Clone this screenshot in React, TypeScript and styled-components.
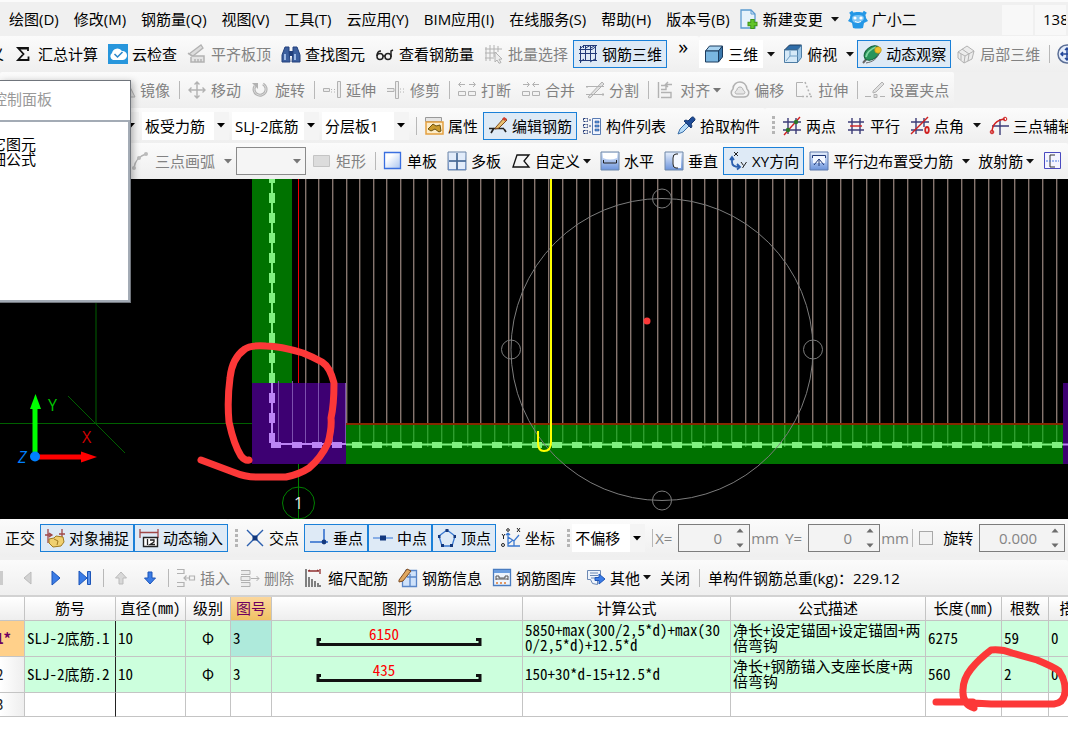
import React from 'react';
import styled, { createGlobalStyle, css } from 'styled-components';

const Global = createGlobalStyle`
  * { box-sizing: border-box; }
  body {
    margin: 0;
    background: #ffffff;
    color: #000000;
    font: 15px/20px "Open Sans", "Noto Sans CJK SC", sans-serif;
    overflow-x: hidden;
  }
  button, input, select { font: inherit; color: inherit; margin: 0; padding: 0; border: 0; background: none; }
`;

const Page = styled.main`
  position: relative;
  overflow: hidden;
  background: #f0f0f0;
  border-top: 2px solid #fbfbfb;
`;

const Row = styled.div<{ $h: number; $top?: number }>`
  display: flex;
  align-items: stretch;
  height: ${p => p.$h}px;
  padding-top: ${p => p.$top ?? 0}px;
  overflow: hidden;
`;

const Strip = styled.div<{ $start?: number; $grow?: boolean }>`
  display: flex;
  align-items: center;
  flex: ${p => (p.$grow ? '1 0 auto' : 'none')};
  padding-left: ${p => Math.max(p.$start ?? 0, 0)}px;
  margin-left: ${p => Math.min(p.$start ?? 0, 0)}px;
  background: linear-gradient(#fbfbfb, #efefef);
  border-radius: 2px;
`;

const MenuBar = styled.nav`
  display: flex;
  align-items: center;
  height: 34px;
  padding-left: 9px;
  overflow: hidden;
`;
const Menus = styled.div`
  display: flex;
  flex: none;
  gap: 15px;
  margin-right: 4px;
`;

const Button = styled.button<{ $on?: boolean; $off?: boolean; $white?: boolean }>`
  display: flex;
  align-items: center;
  flex: none;
  gap: 4px;
  height: 28px;
  padding: 0 4px;
  border: 1px solid transparent;
  white-space: nowrap;
  color: ${p => (p.$off ? '#828282' : '#000000')};
  ${p => p.$white && css`background: #ffffff;`}
  ${p => p.$on && css`background: #deeaf6; border-color: #1a80d8;`}
`;

const IconButton = styled.button`
  display: flex;
  flex: none;
  align-items: center;
  justify-content: center;
  width: 29px;
  height: 28px;
`;

const Caret = styled.button<{ $narrow?: boolean; $off?: boolean }>`
  display: flex;
  flex: none;
  align-items: center;
  justify-content: center;
  width: ${p => (p.$narrow ? 10 : 15)}px;
  height: 28px;
  margin-left: ${p => (p.$narrow ? -3 : 0)}px;
  margin-right: ${p => (p.$narrow ? 3 : 0)}px;
  color: ${p => (p.$off ? '#777777' : '#111111')};
`;

const Divider = styled.span`
  flex: none;
  width: 1px;
  height: 18px;
  margin: 0 2px 0 4px;
  background: #b8b8b8;
`;

const Grip = styled.span`
  flex: none;
  width: 3px;
  height: 19px;
  margin: 0 2px 0 7px;
  background: repeating-linear-gradient(#b5b5b5 0 3px, transparent 3px 5px);
`;

const Combo = styled.label<{ $w: number; $boxed?: boolean }>`
  display: flex;
  flex: none;
  align-items: center;
  width: ${p => p.$w}px;
  height: 28px;
  margin-right: ${p => (p.$boxed ? 1 : 3)}px;
  margin-left: ${p => (p.$boxed ? 1 : 0)}px;
  padding-right: 4px;
  background: ${p => (p.$boxed ? '#f5f5f5' : 'linear-gradient(90deg, #ffffff calc(100% - 15px), #f4f4f4 calc(100% - 15px))')};
  border: ${p => (p.$boxed ? '1px solid #8a8a8a' : '0')};
  color: ${p => (p.$boxed ? '#777777' : '#000000')};
  select {
    appearance: none;
    flex: 1;
    min-width: 0;
    height: 26px;
    padding-left: 3px;
    margin-right: 6px;
    overflow: hidden;
    outline: 0;
    text-overflow: clip;
  }
`;

const MenuItem = styled.button`
  flex: none;
  white-space: nowrap;
`;
const MenuBox = styled.div`
  flex: none;
  width: 31px;
  height: 30px;
  margin: 2px 2px 0 0;
  padding-left: 8px;
  line-height: 28px;
  overflow: hidden;
  background: #f8f8f8;
`;
const Spacer = styled.span`flex: 1;`;
const More = styled.button`
  flex: none;
  width: 32px;
  height: 34px;
  font-size: 20px;
  line-height: 20px;
  display: flex;
  justify-content: center;
`;
const Plain = styled.span<{ $off?: boolean }>`
  flex: none;
  padding: 0 6px;
  white-space: nowrap;
  color: ${p => (p.$off ? '#8c8c8c' : '#000000')};
`;
const Field = styled.label<{ $w: number }>`
  display: flex;
  align-items: center;
  flex: none;
  width: ${p => p.$w}px;
  height: 28px;
  padding-right: 5px;
  border: 1px solid #7c7c7c;
  background: #f3f3f3;
  color: #858585;
  input {
    flex: 1;
    min-width: 0;
    text-align: right;
    padding-right: 14px;
    outline: 0;
  }
`;
const Unit = styled.span`
  flex: none;
  width: 28px;
  padding-left: 1px;
  color: #858585;
`;
const AxisName = styled.span<{ $gap?: boolean }>`
  flex: none;
  width: ${p => (p.$gap ? 30 : 23)}px;
  padding-left: ${p => (p.$gap ? 7 : 0)}px;
  color: #858585;
`;
const Check = styled.label`
  display: flex;
  align-items: center;
  flex: none;
  gap: 10px;
  margin: 0 6px 0 4px;
  input {
    appearance: none;
    width: 14px;
    height: 14px;
    border: 1px solid #a8a8a8;
    background: #f2f2f2;
  }
`;

const Svg = styled.svg`
  display: block;
  flex: none;
`;

const View = styled.svg`
  display: block;
  width: 100%;
  height: 340px;
  background: #000000;
`;

const Dialog = styled.section`
  position: absolute;
  left: 0;
  top: 78px;
  width: 131px;
  height: 223px;
  display: flex;
  flex-direction: column;
  overflow: hidden;
  background: #ffffff;
  border: solid #70757c;
  border-width: 1px 1px 1px 0;
  box-shadow: 2px 2px 7px rgba(0, 0, 0, 0.3);
`;
const DialogTitle = styled.h2`
  margin: 0 0 0 -8px;
  height: 39px;
  font-size: 15px;
  font-weight: 400;
  line-height: 36px;
  color: #999999;
`;
const DialogBody = styled.div`
  flex: 1;
  padding: 15px 0 0;
  border: solid #a3abb5;
  border-width: 2px 2px 2px 0;
  line-height: 15px;
  p { margin: 0 0 0 -9px; }
`;

const Sheet = styled.div`
  position: relative;
  overflow: hidden;
  min-height: 135px;
  background: #ffffff;
  border-top: 2px solid #d2d2d2;
`;
const Table = styled.table`
  width: max(100%, 1101px);
  table-layout: fixed;
  border-collapse: separate;
  border-spacing: 0;
  font-family: "Noto Sans CJK SC", sans-serif;
  font-feature-settings: "hwid" 1;
  line-height: 15px;
`;
const Th = styled.th<{ $hot?: boolean }>`
  height: 24px;
  padding: 0 0 2px;
  font-weight: 400;
  white-space: nowrap;
  overflow: hidden;
  border-right: 1px solid #c4c4c4;
  border-bottom: 1px solid #c4c4c4;
  background: ${p => (p.$hot ? 'linear-gradient(#fbd79d, #f0c264)' : 'linear-gradient(#ffffff, #eeeeee)')};
  color: ${p => (p.$hot ? '#6e0060' : '#000000')};
`;
const Td = styled.td<{ $bg?: string; $dark?: boolean; $center?: boolean; $tight?: boolean }>`
  height: ${p => (p.$tight ? 24 : 36)}px;
  padding: 0 0 3px ${p => (p.$center ? 0 : 2)}px;
  overflow: hidden;
  text-align: ${p => (p.$center ? 'center' : 'left')};
  border-right: 1px solid ${p => (p.$dark ? '#222222' : '#c4c4c4')};
  border-bottom: 1px solid #c4c4c4;
  background: ${p => p.$bg ?? '#ffffff'};
`;
const RowHead = styled.th<{ $hot?: boolean }>`
  padding: 0 0 3px;
  overflow: hidden;
  text-align: left;
  text-indent: -4px;
  font-weight: ${p => (p.$hot ? 700 : 400)};
  color: ${p => (p.$hot ? '#6e0060' : '#222222')};
  background: ${p => (p.$hot ? '#ffd08a' : 'linear-gradient(90deg, #ffffff, #eeeeee)')};
  border-right: 1px solid #c4c4c4;
  border-bottom: 1px solid #c4c4c4;
`;
const Markup = styled.svg`
  position: absolute;
  left: 926px;
  top: 43px;
  pointer-events: none;
`;

const G = '#b2b2b2';
const B = '#2b5fae';
const N = '#223a78';

const art: Record<string, React.ReactNode> = {
  sigma: <path d="M14 7V4H4l5.500 6L4 16h10.500v-3.500M5 4.700h8" stroke="#111" strokeWidth="1.800" />,
  cloud: (
    <>
      <rect width="20" height="20" fill="#2796dc" />
      <path d="M5 16a4 4 0 0 1-1-7 5.500 5.500 0 0 1 10-2 4.500 4.500 0 0 1 1 9z" fill="#fff" />
      <path d="M6.500 10l3 3 5-5" stroke="#2b86c8" strokeWidth="1.500" />
    </>
  ),
  level: (
    <>
      <path d="M2 10L14 1l2 3L6 12z" fill="#ddd" stroke={G} strokeWidth="1.300" />
      <path d="M1 9l4 3h12v6H4v-5M8 18v-3M11 18v-3M14 18v-3" stroke={G} strokeWidth="1.500" fill="#e4e4e4" />
    </>
  ),
  find: (
    <>
      <path d="M4 3h4v4l1 11H1V11zM12 3h4l3 8v7h-8l1-11z" fill="#3c5f9e" stroke="#22407c" />
      <path d="M8 7h4v5H8z" fill="#22407c" />
      <path d="M4 10v6M14 10v6" stroke="#a8c2ea" strokeWidth="1.800" />
    </>
  ),
  glasses: (
    <>
      <circle cx="5" cy="12.500" r="3" stroke="#222" strokeWidth="1.500" />
      <circle cx="13" cy="12.500" r="3" stroke="#222" strokeWidth="1.500" />
      <path d="M2 12c0-3 1-5 4-5M8 12h2M16 13V7l2-1" stroke="#222" strokeWidth="1.500" />
    </>
  ),
  batch: (
    <>
      <path d="M2 3v14M6 1v16M10 1v12M1 5h17M1 9h12M1 14h9M14 2v6" stroke={G} />
      <path d="M11 8l7 7-3 .3 2 3.200-2 .8-2-3.300-2 2z" fill="#eee" stroke={G} />
    </>
  ),
  grid3: (
    <path d="M2.500 2v17M7.500 2v15M12.500 2v15M17.500 1v16M5.500 1v3M1 9.500h18M1 16.500h18M2 4.500L6 1.500h13M7 4.500l5-3M12 4.500l5-3M1 5.500h13l4-3M2 18l4-3M12 18l5-3" stroke={N} />
  ),
  cube: (
    <>
      <path d="M1.500 7l4-5h13l-4 5z" fill="#a9d3f0" stroke="#1d3c5e" />
      <path d="M14.500 7l4-5v11l-4 5z" fill="#3b79ae" stroke="#1d3c5e" />
      <path d="M1.500 7h13v11h-13z" fill="#7ab6e0" stroke="#1d3c5e" />
    </>
  ),
  top: (
    <>
      <path d="M1.500 6l5-5h12l-4 5z" fill="#2f6da8" stroke="#1d3c5e" />
      <path d="M1.500 6h13v12.500h-13z" fill="#d5e9f8" stroke="#4d7ca4" />
      <path d="M14.500 6l4-5v12.500l-4 5z" fill="#9cc5e6" stroke="#4d7ca4" />
      <path d="M3 17l4-5h8M7 7v5" stroke="#6f9ec4" />
    </>
  ),
  orbit: (
    <>
      <path d="M1 19l5-6" stroke="#666" strokeWidth="2" />
      <ellipse cx="10" cy="9" rx="9" ry="6" transform="rotate(-38 10 9)" fill="#27945a" stroke="#14603a" />
      <path d="M4 13c1-5 5-8 10-10" stroke="#7ed6a2" strokeWidth="1.800" />
      <path d="M4 19c6-1 12-4 13-11" stroke="#666" />
      <circle cx="16" cy="6" r="3.300" fill="#f0c02a" stroke="#b08a10" strokeWidth=".6" />
    </>
  ),
  local: (
    <>
      <path d="M2 8l9-6 7 5-2 8-8 4-6-5z" fill="#ececec" stroke={G} />
      <path d="M2 8l7 4 9-5M9 12l-1 7M6 5l7 5-1 7M5 10v6" stroke={G} />
    </>
  ),
  pan: (
    <>
      <circle cx="10" cy="10" r="9" fill="#e4ecfa" stroke="#5c6f96" strokeWidth="1.500" />
      <path d="M10 4v12M4 10h12M8 6l2-2 2 2M8 14l2 2 2-2M6 8l-2 2 2 2" stroke="#23479a" strokeWidth="1.500" />
    </>
  ),
  mirror: <path d="M8 3v14H1zM12 3v14h7z" stroke={G} fill="#e6e6e6" />,
  move: <path d="M10 2v16M2 10h16M7.500 4.500L10 2l2.500 2.500M7.500 15.500L10 18l2.500-2.500M4.500 7.500L2 10l2.500 2.500M15.500 7.500L18 10l-2.500 2.500" stroke={G} strokeWidth="1.400" />,
  rotate: (
    <>
      <path d="M4 6a6 6 0 1 0 8-2" stroke={G} strokeWidth="3" />
      <path d="M4 6a6 6 0 1 0 8-2" stroke="#ddd" />
      <path d="M1 3h6v6z" fill={G} />
    </>
  ),
  extend: <path d="M1.500 8.500h6v3h-6zM9 9.500h1M12 9.500h1M9 12h1M12 12h1M15.500 1.500v16h3v-16z" stroke={G} fill="#ececec" />,
  trim: <path d="M1 8.500h7v3H1M9.500 1.500v17h3v-17zM14 9h1M17 9h1M14 12h1M17 12h1" stroke={G} fill="#ececec" />,
  breakIt: <path d="M1.500 11.500h7v4h-7zM11.500 11.500h7v4h-7zM8 4.500H2M4 2L1.500 4.500 4 7M12 4.500h6M16 2l2.500 2.500L16 7" stroke={G} fill="#f2f2f2" />,
  merge: <path d="M1.500 11.500h7v4h-7zM11.500 11.500h7v4h-7zM2 4.500h6M6 2l2.500 2.500L6 7M18 4.500h-6M14 2l-2.500 2.500L14 7" stroke={G} fill="#f2f2f2" />,
  split: <path d="M1 6.500h18M1 14.500h18M3 17L17 2l2 2L5 18zM2 6v2M18 13v3" stroke={G} fill="#e0e0e0" />,
  align: <path d="M2.500 2v16M5 5.500h5v4H5M5 12.500h10v5H5M16 4.500h-6M12 2L9.500 4.500 12 7" stroke={G} strokeWidth="1.400" />,
  offset: (
    <>
      <path d="M6 17c-5 0-6-5-3-8 0-5 4-7 7-7s6 2 7 7c3 3 2 8-3 8z" stroke={G} strokeWidth="1.500" />
      <path d="M7 14c-3 0-2-3 0-4 0-4 6-4 6 0 2 1 3 4 0 4z" stroke={G} fill="#e6e6e6" />
    </>
  ),
  stretch: (
    <>
      <path d="M9 2.500H2.500v14H9" stroke={G} />
      <path d="M11 2l6 15M8 16.500h11" stroke={G} strokeDasharray="2 2" strokeWidth="1.500" />
    </>
  ),
  gripPt: <path d="M0 16.500h6M9 14.500h3v3H9zM15 16.500h5M8 11l9-9 2 2-8 8-3 1z" stroke={G} fill="#e0e0e0" />,
  props: (
    <>
      <path d="M1.500 1.500h16v4h-16z" fill="#e4e4e4" stroke="#999" />
      <path d="M2 6h17v12H2z" fill="#fdecc8" stroke="#e4a040" strokeWidth="1.500" />
      <path d="M4 13l5-5 3 2 4-1 1 6-2 1-4-3-4 2z" fill="#c9992c" stroke="#6c5210" />
    </>
  ),
  edit: (
    <>
      <path d="M1 12.500h15M3 17l3-5M16 13l2 3" stroke="#222" strokeWidth="1.700" />
      <path d="M8 11l8-9 3 2-8 8-4 1z" fill="#e8c070" stroke="#7c4a20" />
      <path d="M16 1l3 2-2 2-3-2z" fill="#d04030" />
    </>
  ),
  list: (
    <>
      <path d="M1.500 2.500h4v3h-4zM1.500 8.500h4v3h-4zM1.500 14.500h4v3h-4zM7 4h2M7 10h2M7 16h2" stroke={N} strokeDasharray="2 1" />
      <path d="M10.500 2.500h8v16h-8z" fill="#eef4ff" stroke="#5a7cb4" />
      <path d="M13 5h4v2h-4zM13 9h4v2h-4zM13 13h4v2h-4z" fill="#5a9ae0" stroke={N} strokeWidth=".5" />
    </>
  ),
  pick: (
    <>
      <path d="M2 18l2-5 6-6 3 3-6 6z" fill="#b8dcf8" stroke="#3a6ea8" />
      <path d="M8 5l7 7 1-2-1-2 4-4c0-3-3-4-4-2l-3 3-2-1z" fill="#1f4c98" stroke="#17386e" />
    </>
  ),
  twoPt: (
    <>
      <path d="M6 2v16M14 2v16M1 6h18M1 14h18" stroke="#3c3c78" strokeWidth="1.400" />
      <path d="M2 19L18 1" stroke="#d02020" strokeWidth="1.400" />
      <circle cx="6" cy="14" r="2.200" fill="#2a7a2a" />
      <circle cx="14" cy="6" r="2.200" fill="#2a7a2a" />
    </>
  ),
  parallel: (
    <>
      <path d="M6 2v16M14 2v16M2 6h16M2 14h16" stroke="#3c3c78" strokeWidth="1.400" />
      <path d="M4 10h12" stroke="#d02020" strokeWidth="1.400" />
    </>
  ),
  angle: (
    <>
      <path d="M6 2v16M14 2v9M1 6h18M1 14h12" stroke="#3c3c78" strokeWidth="1.400" />
      <path d="M1 18L18 1" stroke="#d02020" strokeWidth="1.400" />
      <ellipse cx="17" cy="14" rx="1.800" ry="3" stroke="#d02020" strokeWidth="1.800" />
    </>
  ),
  aux: (
    <>
      <path d="M11 3v16M3 10h17" stroke="#3c3c78" strokeWidth="1.400" />
      <path d="M3 17c0-8 4-13 13-14" stroke="#d02020" strokeWidth="1.400" />
      <circle cx="3" cy="16" r="1.800" stroke="#d02020" />
      <circle cx="16" cy="3" r="1.800" stroke="#d02020" />
    </>
  ),
  arc: (
    <>
      <path d="M3 17C4 10 8 5 15 3" stroke={G} strokeWidth="1.400" />
      <circle cx="3" cy="17" r="2" fill="#bbb" />
      <circle cx="8" cy="7" r="2" fill="#bbb" />
      <circle cx="15" cy="3" r="2" fill="#bbb" />
    </>
  ),
  rect: <path d="M1.500 4.500h16v11h-16z" fill="#dcdcdc" stroke="#c4c4c4" />,
  slab: <path d="M1.500 1.500h16v16h-16z" fill="url(#fade)" stroke="#3a6fe0" strokeWidth="1.300" />,
  slabs: (
    <>
      <path d="M1 1h18v18H1z" fill="url(#deep)" stroke="#6d86a8" />
      <path d="M2 2h7v7H2zM11 2h7v7h-7zM2 11h7v7H2zM11 11h7v7h-7z" fill="#e2ecfa" />
      <path d="M10 2v17M2 10h17" stroke="#44658e" strokeWidth="1.500" />
    </>
  ),
  custom: <path d="M2 16L6 4h12l-5 6 5 6z" stroke="#111" strokeWidth="1.300" />,
  horiz: (
    <>
      <path d="M1 1h18v18H1z" fill="url(#deep)" stroke="#6d86a8" />
      <path d="M3 2h14v5q-7 3-14 0z" fill="#fff" />
      <path d="M3.500 9v3h13V9" stroke="#222" />
    </>
  ),
  vert: (
    <>
      <path d="M1 1h18v18H1z" fill="url(#deep)" stroke="#6d86a8" />
      <path d="M10 3q-3 7 0 14h7V3z" fill="#f4f8ff" />
      <path d="M14 3h-2q-3 0-3 4v6q0 4 3 4h2" stroke="#222" />
    </>
  ),
  xy: (
    <>
      <path d="M4 6v5c0 3 2 5 7 5M2 9l2-3 2 3M9 13l3 3-3 2.500" stroke={B} strokeWidth="1.800" />
      <path d="M6 1l4 4M10 1L6 5M13 11l2.500 3.500M18.500 11l-4 6" stroke="#222" />
    </>
  ),
  along: (
    <>
      <path d="M1 1h18v18H1z" fill="url(#deep)" stroke="#5c78ac" />
      <path d="M4 4h12v8H4z" fill="#f4f8ff" />
      <path d="M3.500 7V4.500h13V7M10 8v7M5 14l5-6 5 6" stroke="#223a78" />
    </>
  ),
  bracket: (
    <>
      <path d="M1.500 1.500h16v16h-16z" fill="#f4f4ff" stroke="#4a4ac0" />
      <path d="M12 4H7v12h5" stroke="#333" />
      <path d="M3 10h13" stroke="#4a7ae0" strokeDasharray="2 1" />
    </>
  ),
  doc: (
    <>
      <path d="M2 1h10l4 4v14H2z" fill="#e6f2fb" stroke="#5a9ad0" strokeWidth="1.300" />
      <path d="M12 1v4h4" stroke="#5a9ad0" />
      <path d="M13.500 10v10M8.500 15h10" stroke="#3f9414" strokeWidth="4.500" />
      <path d="M13.500 11v8M9.500 15h8" stroke="#62c42a" strokeWidth="2.500" />
    </>
  ),
  robot: (
    <>
      <path d="M2 9c0-5 4-6 8-6s8 1 8 6l2 3-4 2-1 5q-5 1-10 0l-1-5-4-2z" fill="#2497e6" />
      <path d="M2 5l3-2M18 5l-3-2" stroke="#2497e6" strokeWidth="3" />
      <path d="M4 9q0-3 6-3t6 3-6 4.500T4 9" fill="#7cc4f4" />
      <circle cx="7" cy="9" r="1.600" fill="#fff" />
      <circle cx="13" cy="9" r="1.600" fill="#fff" />
      <path d="M7 12.500q3 2 6 0" stroke="#fff" />
    </>
  ),
  snap: (
    <>
      <path d="M3 1v14M17 1v8M0 7h6M14 6h6M4 5l3 2-3 2" stroke="#a04848" strokeWidth="1.300" />
      <path d="M4 11l5-1 2-2 7 1 1 5-3 4-8 1-4-4z" fill="#f0d070" stroke="#a07a20" />
      <path d="M9 11l4 2-1 4" stroke="#a07a20" />
    </>
  ),
  dyn: (
    <>
      <path d="M1 1v9M19 1v9M1 4.500h18" stroke="#a04848" strokeWidth="1.300" />
      <path d="M4.500 9.500h14v9h-14z" fill="#fff" stroke="#222" strokeWidth="1.400" />
      <path d="M8.500 11v6M11 12h4v2l-4 2.500h5" stroke="#222" strokeWidth="1.300" />
    </>
  ),
  cross: (
    <>
      <path d="M2 2l16 16M18 2L2 18" stroke={B} strokeWidth="1.400" />
      <path d="M7.500 7.500h5v5h-5z" fill="#12387e" />
    </>
  ),
  perp: (
    <>
      <path d="M1 14h18M15 1v13" stroke="#2a6acb" strokeWidth="1.500" />
      <circle cx="15" cy="14" r="2.400" fill="#12387e" />
    </>
  ),
  mid: (
    <>
      <path d="M0 10h20" stroke="#6a9ae0" strokeWidth="1.500" />
      <path d="M7 7.500h6v5H7z" fill="#12387e" />
    </>
  ),
  vertex: (
    <>
      <path d="M10 2l8 6-3 10H5L2 8z" stroke="#3a78d0" strokeWidth="1.300" />
      <path d="M8.500 1h3v3h-3zM1 7h2.500v3H1zM16.500 7H19v3h-2.500zM4 16h3v3H4zM13 16h3v3h-3z" fill="#12387e" />
    </>
  ),
  coord: (
    <>
      <path d="M7 5v13h12M7 5L5 7M7 5l2 2M7 9l6 4 5-6M7 16l5-4M13 12v6" stroke="#3a78d0" strokeWidth="1.300" />
      <circle cx="7" cy="2" r="1.300" stroke="#222" />
      <circle cx="2" cy="17" r="1.500" stroke="#222" />
      <path d="M1 6l1.500 2L4 6M2.500 8v3M16 0l3 4M19 0l-3 4" stroke="#222" />
    </>
  ),
  prev: <path d="M14 4v12l-7-6z" fill="#d2d2d2" stroke="#bbb" />,
  next: <path d="M6 3v14l8-7z" fill="#3b7ce6" stroke="#1c55b8" />,
  last: (
    <>
      <path d="M4 3v14l8-7z" fill="#3b7ce6" stroke="#1c55b8" />
      <path d="M12.500 3.500h3v13h-3z" fill="#5b92ea" stroke="#1c55b8" />
    </>
  ),
  first: <path d="M11 3h4v14h-4z" fill="#ccc" />,
  up: <path d="M10 4l5.500 6H12v6H8v-6H4.500z" fill="#d8d8d8" stroke="#bbb" />,
  down: <path d="M10 16l5.500-6H12V4H8v6H4.500z" fill="#3b7ce6" stroke="#1c55b8" />,
  insert: <path d="M1 1.500h7v4H1M1 14.500h7v4H1M8 10h5M10.500 7.500L8 10l2.500 2.500M13.500 8h5v4h-5z" stroke={G} strokeWidth="1.200" />,
  remove: <path d="M1 2.500h9v4H1M1 8.500h9v4H1zM1 14.500h9v4H1M11 10.500h8M16.500 8l2.500 2.500-2.500 2.500" stroke={G} fill="#ececec" />,
  scale: (
    <>
      <path d="M2 1v18M5 9v10M8 11v8M11 13v6M14 15v4M16 17v2" stroke="#444" strokeWidth="1.300" />
      <path d="M4 3h11M4 3l2-1M15 3l-2-1M16 1v5" stroke="#903030" strokeWidth="1.300" />
    </>
  ),
  info: (
    <>
      <path d="M7 2.500h11.500v16h-14V12" fill="#cfe2fa" stroke="#5a86c8" strokeWidth="1.300" />
      <path d="M9 9h9M12 6v13" stroke="#5a86c8" strokeWidth="1.300" />
      <path d="M1 12L9 1l4 2-8 10-4 1z" fill="#e0a860" stroke="#7c4a20" />
    </>
  ),
  lib: (
    <>
      <path d="M1.500 1.500h17v16h-17z" fill="#eef4fc" stroke="#4a7cc0" strokeWidth="1.300" />
      <path d="M2 2h16v3H2z" fill="#6b9ee0" />
      <path d="M4 12V8h3v2h6V8h3v4M4 11h12" stroke="#555" />
      <path d="M4 15h2M8 15h2M12 15h2" stroke="#e07a30" strokeWidth="1.500" />
    </>
  ),
  other: (
    <>
      <path d="M1.500 2.500h13v9h-3v5l-5-1-2-4h-3z" fill="#eef4fc" stroke="#6b88b4" />
      <path d="M4 5h8M4 7.500h8M5 10h5" stroke="#6b88b4" />
      <path d="M9 9.500h4V6l6 5-6 5v-3.500H9z" fill="#3b7ce6" stroke="#1c55b8" />
    </>
  ),
};

const Icon = ({ n }: { n: string }) => (
  <Svg width="20" height="20" viewBox="0 0 20 20" fill="none" aria-hidden="true">
    {art[n]}
  </Svg>
);

const Tri = () => (
  <Svg width="8" height="5" viewBox="0 0 8 5" aria-hidden="true">
    <path d="M0 0h8L4 4.500z" fill="currentColor" />
  </Svg>
);

type ToolProps = { n?: string; t?: string; on?: boolean; off?: boolean; white?: boolean; more?: 'wide' | 'narrow' };
const Tool = ({ n, t, on, off, white, more }: ToolProps) => (
  <>
    <Button type="button" $on={on} $off={off} $white={white} aria-label={t ? undefined : n}>
      {n && <Icon n={n} />}
      {t && <span>{t}</span>}
    </Button>
    {more && (
      <Caret type="button" $narrow={more === 'narrow'} $off={off} aria-label={`${t}选项`}>
        <Tri />
      </Caret>
    )}
  </>
);

const Select = ({ value, w, boxed, label }: { value: string; w: number; boxed?: boolean; label: string }) => (
  <Combo $w={w} $boxed={boxed}>
    <select aria-label={label} defaultValue={value}>
      <option value={value}>{value}</option>
    </select>
    <Tri />
  </Combo>
);

const NumberField = ({ value, w, label }: { value: string; w: number; label: string }) => (
  <Field $w={w}>
    <input type="text" defaultValue={value} aria-label={label} />
    <Svg width="8" height="20" viewBox="0 0 8 20" aria-hidden="true">
      <path d="M0.500 4.500h7L4 0.500zM0.500 15.500h7L4 19.500z" fill="#6c6c6c" />
    </Svg>
  </Field>
);

const menus = ['绘图(D)', '修改(M)', '钢筋量(Q)', '视图(V)', '工具(T)', '云应用(Y)', 'BIM应用(I)', '在线服务(S)', '帮助(H)', '版本号(B)'];

const bars = [
  305, 318, 332, 346, 359, 373, 386, 400, 413, 427, 441, 453, 467, 480, 494, 508, 522, 534, 548, 562, 576, 589, 602, 616,
  630, 643, 657, 671, 681, 691, 704, 717, 731, 745, 758, 772, 784, 798, 812, 826, 840, 852, 866, 879, 893, 907, 921, 933,
  947, 961, 974, 988, 1001, 1014, 1028, 1042, 1056,
];

const Viewport = () => (
  <View viewBox="0 179 1068 340" preserveAspectRatio="xMinYMin slice" role="img" aria-label="钢筋平面图">
    <g fill="none">
      <path d="M252 179h40v204h-40zM346 423h722v41H346z" fill="#007200" />
      <path d="M96 300v123M0 423.500h252M68 396l57 57" stroke="#006000" />
      <path d="M298.500 179v204" stroke="#f00000" />
      <path d="M346 424h717" stroke="#b01000" strokeWidth="1.500" />
      {bars.map(x => (
        <path key={x} d={`M${x + 0.7} 179V${x < 346 ? 383 : 423}`} stroke="#86756f" strokeWidth="1.400" />
      ))}
      {bars.filter(x => x > 346).map((x, i) => (
        <path key={x} d={`M${x + 0.7} 425V${i % 3 === 2 ? 447 : 443}`} stroke="#2f9e2f" strokeWidth="1.400" />
      ))}
      <path d="M252 383h94v81h-94zM1063 383h5v81h-5z" fill="#3d0072" />
      {[278, 292, 305, 318, 332, 345].map(x => (
        <path key={x} d={`M${x + 0.5} ${x < 300 ? 381 : 383}V445`} stroke="#7d50ae" />
      ))}
      <path d="M272 179v204M346 444.500h717" stroke="#80f080" strokeWidth="2" />
      <path d="M272 179v204" stroke="#80f080" strokeWidth="6" strokeDasharray="10 10" strokeDashoffset="6" />
      <path d="M352 445h711" stroke="#80f080" strokeWidth="6" strokeDasharray="10 10" />
      <path d="M272 383v61h74M1063 444.500h5" stroke="#bc84f4" strokeWidth="2" />
      <path d="M272 393v10M272 413v10M272 433v10M271 445h10M292 445h10M312 445h10M332 445h10" stroke="#bc84f4" strokeWidth="6" />

      <g stroke="#7c7c7c">
        <circle cx="662" cy="349.500" r="151" />
        <circle cx="662" cy="198.500" r="9.500" />
        <circle cx="662" cy="500.500" r="9.500" />
        <circle cx="511" cy="349.500" r="9.500" />
        <circle cx="813" cy="349.500" r="9.500" />
      </g>
      <path d="M551 179v263q0 9-7 9-6 0-6-8v-12" stroke="#ffff00" strokeWidth="2" />
      <circle cx="647" cy="321" r="3.500" fill="#fc3838" />

      <path d="M298.500 464v55" stroke="#008000" />
      <circle cx="298.500" cy="503" r="16" stroke="#008000" />
      <path d="M35 452v-44" stroke="#00ff00" strokeWidth="5" />
      <path d="M30 409l5.500-15 5.500 15z" fill="#00ff00" />
      <path d="M38 457h45" stroke="#ff0000" strokeWidth="5" />
      <path d="M81 451.500l16 5.500-16 5.500z" fill="#ff0000" />
      <circle cx="35" cy="456.500" r="5" fill="#0080ff" />
      <path
        d="M201 460L233 472Q245 477 256 477H286Q300 474 309 468 321 458 328 443 332 428 331 418 334 405 334 383 330 367 322 362 313 357 303 353 280 346 266 346 250 345 245 349 232 358 230 378 227 400 229 422 234 445 241 456 245 461 249 460"
        stroke="#fc3838"
        strokeWidth="7"
        strokeLinecap="round"
        strokeLinejoin="round"
      />
    </g>
    <g fontFamily="'Open Sans', sans-serif" fontSize="16">
      <text x="48" y="411" fill="#00c800">Y</text>
      <text x="82" y="443" fill="#d00000">X</text>
      <text x="18" y="463" fill="#0080ff" fontStyle="italic">Z</text>
      <text x="294" y="509" fill="#e8e8e8">1</text>
    </g>
  </View>
);

const Shape = ({ value }: { value: string }) => (
  <Svg width="250" height="32" viewBox="0 0 250 32" role="img" aria-label={value}>
    <text x="112" y="19" textAnchor="middle" fill="#ff0000">{value}</text>
    <path d="M49 18.500h-3v5h162v-5h-4" fill="none" stroke="#111111" strokeWidth="3" />
  </Svg>
);

const headers = ['筋号', '直径(mm)', '级别', '图号', '图形', '计算公式', '公式描述', '长度(mm)', '根数', '搭接'];
const widths = [25, 91, 70, 45, 41, 251, 208, 195, 76, 47, 52];
const data = [
  { no: '1*', name: 'SLJ-2底筋.1', shape: '6150', calc: ['5850+max(300/2,5*d)+max(30', '0/2,5*d)+12.5*d'], desc: ['净长+设定锚固+设定锚固+两', '倍弯钩'], len: '6275', count: '59' },
  { no: '2', name: 'SLJ-2底筋.2', shape: '435', calc: ['150+30*d-15+12.5*d'], desc: ['净长+钢筋锚入支座长度+两', '倍弯钩'], len: '560', count: '2' },
];
const Lines = ({ of }: { of: string[] }) => (
  <>
    {of.map((l, i) => (
      <React.Fragment key={l}>
        {i > 0 && <br />}
        {l}
      </React.Fragment>
    ))}
  </>
);

const green = '#ccffdd';

export default function App() {
  return (
    <Page>
      <Global />
      <Svg width="0" height="0" aria-hidden="true">
        <linearGradient id="fade" x1="0" y1="0" x2="1" y2="1">
          <stop offset=".3" stopColor="#ffffff" />
          <stop offset="1" stopColor="#a8c4f0" />
        </linearGradient>
        <linearGradient id="deep" x1="0" y1="0" x2="0" y2="1">
          <stop offset="0" stopColor="#e8f0fc" />
          <stop offset="1" stopColor="#6c94dc" />
        </linearGradient>
      </Svg>

      <MenuBar>
        <Menus>
          {menus.map(m => (
            <MenuItem key={m} type="button">{m}</MenuItem>
          ))}
        </Menus>
        <Tool n="doc" t="新建变更" more="wide" />
        <Tool n="robot" t="广小二" />
        <Spacer />
        <MenuBox />
        <MenuBox>138</MenuBox>
      </MenuBar>

      <Row $h={36}>
        <Strip $start={-31}>
          <Tool t="定义" />
          <Tool n="sigma" t="汇总计算" />
          <Tool n="cloud" t="云检查" />
          <Tool n="level" t="平齐板顶" off />
          <Tool n="find" t="查找图元" />
          <Tool n="glasses" t="查看钢筋量" />
          <Tool n="batch" t="批量选择" off />
          <Tool n="grid3" t="钢筋三维" on />
          <More type="button">»</More>
        </Strip>
        <Strip $grow>
          <Tool n="cube" t="三维" white more="wide" />
          <Tool n="top" t="俯视" more="wide" />
          <Tool n="orbit" t="动态观察" on />
          <Tool n="local" t="局部三维" off />
          <Divider />
          <Tool n="pan" />
        </Strip>
      </Row>

      <Row $h={36}>
        <Strip $start={111}>
          <Tool n="mirror" t="镜像" off />
          <Divider />
          <Tool n="move" t="移动" off />
          <Tool n="rotate" t="旋转" off />
          <Divider />
          <Tool n="extend" t="延伸" off />
          <Tool n="trim" t="修剪" off />
          <Divider />
          <Tool n="breakIt" t="打断" off />
          <Tool n="merge" t="合并" off />
          <Tool n="split" t="分割" off />
          <Divider />
          <Tool n="align" t="对齐" off more="narrow" />
          <Tool n="offset" t="偏移" off />
          <Tool n="stretch" t="拉伸" off />
          <Divider />
          <Tool n="gripPt" t="设置夹点" off />
        </Strip>
      </Row>

      <Row $h={35}>
        <Strip $start={52}>
          <Select value="" w={87} label="构件类别" />
          <Select value="板受力筋" w={87} label="构件类型" />
          <Select value="SLJ-2底筋" w={87} label="构件名称" />
          <Select value="分层板1" w={87} label="分层板" />
          <Divider />
          <Tool n="props" t="属性" />
          <Tool n="edit" t="编辑钢筋" on />
          <Tool n="list" t="构件列表" />
          <Tool n="pick" t="拾取构件" />
        </Strip>
        <Strip $grow>
          <Grip />
          <Tool n="twoPt" t="两点" />
          <Tool n="parallel" t="平行" />
          <Tool n="angle" t="点角" more="wide" />
          <Tool n="aux" t="三点辅轴" />
        </Strip>
      </Row>

      <Row $h={36}>
        <Strip $start={126} $grow>
          <Tool n="arc" t="三点画弧" off more="wide" />
          <Select value="" w={70} boxed label="画弧方式" />
          <Tool n="rect" t="矩形" off />
          <Divider />
          <Tool n="slab" t="单板" />
          <Tool n="slabs" t="多板" />
          <Tool n="custom" t="自定义" more="narrow" />
          <Tool n="horiz" t="水平" />
          <Tool n="vert" t="垂直" />
          <Tool n="xy" t="XY方向" on />
          <Tool n="along" t="平行边布置受力筋" more="wide" />
          <Tool t="放射筋" more="narrow" />
          <Tool n="bracket" />
        </Strip>
      </Row>

      <Viewport />

      <Row $h={38}>
        <Strip>
          <Tool t="正交" />
          <Tool n="snap" t="对象捕捉" on />
          <Tool n="dyn" t="动态输入" on />
        </Strip>
        <Strip>
          <Grip />
          <Tool n="cross" t="交点" />
          <Tool n="perp" t="垂点" on />
          <Tool n="mid" t="中点" on />
          <Tool n="vertex" t="顶点" on />
          <Tool n="coord" t="坐标" />
        </Strip>
        <Strip $grow>
          <Grip />
          <Select value="不偏移" w={73} label="偏移方式" />
          <Divider />
          <AxisName>X=</AxisName>
          <NumberField value="0" w={72} label="X" />
          <Unit>mm</Unit>
          <AxisName $gap>Y=</AxisName>
          <NumberField value="0" w={72} label="Y" />
          <Unit>mm</Unit>
          <Divider />
          <Check>
            <input type="checkbox" />
            旋转
          </Check>
          <NumberField value="0.000" w={86} label="旋转角度" />
          <Plain $off>°</Plain>
        </Strip>
      </Row>

      <Row $h={38} $top={3}>
        <Strip $start={-17} $grow>
          <IconButton type="button" aria-label="第一条"><Icon n="first" /></IconButton>
          <IconButton type="button" aria-label="上一条"><Icon n="prev" /></IconButton>
          <IconButton type="button" aria-label="下一条"><Icon n="next" /></IconButton>
          <IconButton type="button" aria-label="最后一条"><Icon n="last" /></IconButton>
          <Divider />
          <IconButton type="button" aria-label="上移"><Icon n="up" /></IconButton>
          <IconButton type="button" aria-label="下移"><Icon n="down" /></IconButton>
          <Divider />
          <Tool n="insert" t="插入" off />
          <Tool n="remove" t="删除" off />
          <Tool n="scale" t="缩尺配筋" />
          <Tool n="info" t="钢筋信息" />
          <Tool n="lib" t="钢筋图库" />
          <Tool n="other" t="其他" more="narrow" />
          <Tool t="关闭" />
          <Divider />
          <Plain>单构件钢筋总重(kg)：229.12</Plain>
        </Strip>
      </Row>

      <Sheet>
        <Table>
          <colgroup>
            {widths.map((w, i) => (
              <col key={i} width={w} />
            ))}
          </colgroup>
          <thead>
            <tr>
              <Th />
              {headers.map(h => (
                <Th key={h} $hot={h === '图号'}>{h}</Th>
              ))}
            </tr>
          </thead>
          <tbody>
            {data.map((r, i) => (
              <tr key={r.no}>
                <RowHead $hot={i === 0}>{r.no}</RowHead>
                <Td $bg={green} $dark>{r.name}</Td>
                <Td $bg={green}>10</Td>
                <Td $bg={green} $center>Φ</Td>
                <Td $bg={i === 0 ? '#aeeadb' : green}>3</Td>
                <Td $bg={green} $center><Shape value={r.shape} /></Td>
                <Td $bg={green}><Lines of={r.calc} /></Td>
                <Td $bg={green}><Lines of={r.desc} /></Td>
                <Td $bg={green}>{r.len}</Td>
                <Td $bg={green}>{r.count}</Td>
                <Td $bg={green}>0</Td>
              </tr>
            ))}
            <tr>
              <RowHead>3</RowHead>
              {headers.map((h, i) => (
                <Td key={h} $tight $dark={i === 0} />
              ))}
            </tr>
          </tbody>
        </Table>
        <Markup width="146" height="80" viewBox="926 640 146 80" aria-hidden="true">
          <path
            d="M936 702H973L974 708Q962 704 963 690 963 679 971 669 979 659 991 650 1002 649 1012 653L1037 660Q1054 667 1059 671 1066 681 1065 692 1064 703 1054 704H991L973 703"
            fill="none"
            stroke="#fc3838"
            strokeWidth="7"
            strokeLinecap="round"
            strokeLinejoin="round"
          />
        </Markup>
      </Sheet>

      <Dialog>
        <DialogTitle>控制面板</DialogTitle>
        <DialogBody>
          <p>它图元</p>
          <p>细公式</p>
        </DialogBody>
      </Dialog>
    </Page>
  );
}
